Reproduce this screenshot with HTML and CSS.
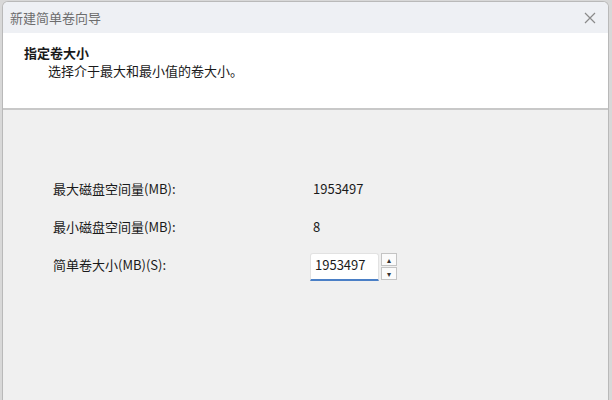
FILE: index.html
```html
<!DOCTYPE html>
<html lang="zh">
<head>
    <meta charset="UTF-8">
    <title>新建简单卷向导</title>
    <link rel="stylesheet" href="styles.css">
</head>
<body>
    <div class="window">
        <div class="titlebar">
            <span class="title">新建简单卷向导</span>
            <span class="close">
                <svg width="12" height="12" viewBox="0 0 12 12"><path d="M1 1L11 11M11 1L1 11" stroke="#8a8a8a" stroke-width="1.2" fill="none"/></svg>
            </span>
        </div>
        <div class="header">
            <div class="head-title">指定卷大小</div>
            <div class="head-sub">选择介于最大和最小值的卷大小。</div>
        </div>
        <div class="content">
            <div class="row">
                <span class="label">最大磁盘空间量(MB):</span>
                <span class="value">1953497</span>
            </div>
            <div class="row">
                <span class="label">最小磁盘空间量(MB):</span>
                <span class="value">8</span>
            </div>
            <div class="row">
                <span class="label">简单卷大小(MB)(S):</span>
                <div class="spin">
                    <div class="spin-input">1953497</div>
                    <div class="spin-btns">
                        <div class="spin-btn">&#9652;</div>
                        <div class="spin-btn">&#9662;</div>
                    </div>
                </div>
            </div>
        </div>
    </div>
</body>
</html>
```

FILE: styles.css
```css
html, body {
    margin: 0;
    height: 100%;
}
body {
    background: #d8d8d8;
    font-family: "Noto Sans CJK SC", "Noto Sans", sans-serif;
    font-size: 13px;
    color: #1a1a1a;
    padding: 1px 3px 0 2px;
    box-sizing: border-box;
}
.window {
    height: 100%;
    background: #f0f0f0;
    border: 1px solid #b9b9b9;
    border-bottom: none;
    border-radius: 6px 6px 0 0;
    overflow: hidden;
    display: flex;
    flex-direction: column;
}
.titlebar {
    height: 31px;
    background: #eef0f4;
    display: flex;
    align-items: center;
    justify-content: space-between;
    padding: 0 12px 0 7px;
}
.title {
    color: #6d6d6d;
    font-size: 13px;
}
.close {
    display: flex;
}
.header {
    background: #fff;
    height: 77px;
    border-bottom: 2px solid #c8c8c8;
    padding: 11px 0 0 21px;
    box-sizing: border-box;
}
.head-title {
    font-weight: bold;
    line-height: 18px;
}
.head-sub {
    padding-left: 24px;
    line-height: 18px;
}
.content {
    flex: 1;
    padding: 64px 0 0 50px;
}
.row {
    display: flex;
    align-items: center;
    height: 28px;
    margin-bottom: 10px;
}
.label {
    width: 257px;
}
.value {
    padding-left: 3px;
}
.spin {
    display: flex;
    height: 28px;
    align-self: flex-start;
    margin-top: 3px;
}
.spin-input {
    width: 63px;
    background: #fff;
    border: 1px solid #e2e2e2;
    border-bottom: 2px solid #4a7fc6;
    padding-left: 4px;
    line-height: 22px;
    border-radius: 3px 3px 0 0;
}
.spin-btns {
    width: 16px;
    height: 25px;
    margin-left: 2px;
    display: flex;
    flex-direction: column;
    gap: 1px;
}
.spin-btn {
    flex: 1;
    background: #fbfbfb;
    border: 1px solid #c4c4c4;
    font-size: 8px;
    line-height: 11px;
    text-align: center;
    color: #333;
}
```
